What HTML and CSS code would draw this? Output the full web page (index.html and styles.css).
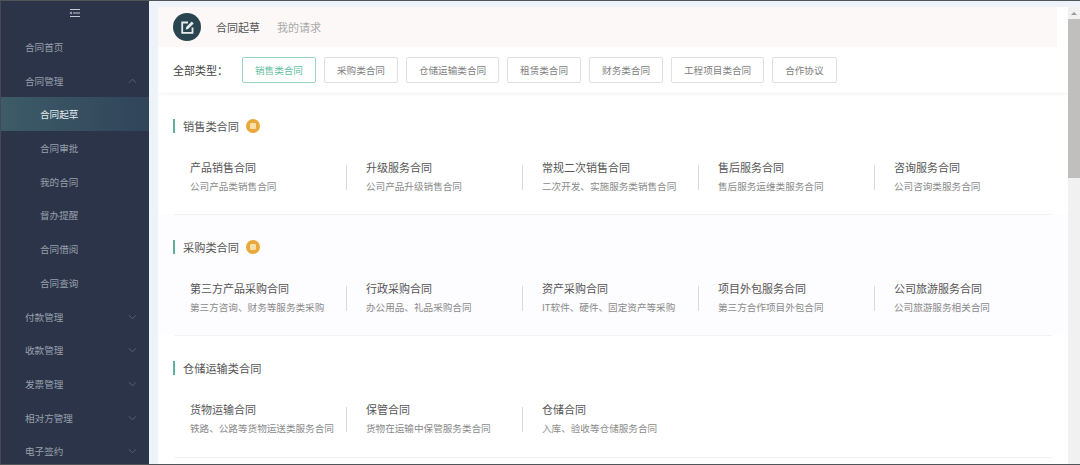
FILE: index.html
```html
<!DOCTYPE html>
<html lang="zh-CN">
<head>
    <meta charset="UTF-8">
    <meta name="viewport" content="width=device-width, initial-scale=1.0">
    <title>合同起草</title>
    <link rel="stylesheet" href="styles.css">
</head>
<body>
<div class="app">
    <aside class="sidebar">
        <div class="toggle">
            <svg width="12" height="10" viewBox="0 0 12 10"><path d="M1 1.5h10M4 5h7M1 8.5h10" stroke="#c4cad4" stroke-width="1" fill="none"/><path d="M0.5 5l2.2-1.6v3.2z" fill="#c4cad4"/></svg>
        </div>
        <a class="menu-item">合同首页</a>
        <a class="menu-item">合同管理<svg class="chevron" viewBox="0 0 10 6"><path d="M1 5l4-4 4 4" /></svg></a>
        <a class="menu-item sub active">合同起草</a>
        <a class="menu-item sub">合同审批</a>
        <a class="menu-item sub">我的合同</a>
        <a class="menu-item sub">督办提醒</a>
        <a class="menu-item sub">合同借阅</a>
        <a class="menu-item sub">合同查询</a>
        <a class="menu-item">付款管理<svg class="chevron" viewBox="0 0 10 6"><path d="M1 1l4 4 4-4" /></svg></a>
        <a class="menu-item">收款管理<svg class="chevron" viewBox="0 0 10 6"><path d="M1 1l4 4 4-4" /></svg></a>
        <a class="menu-item">发票管理<svg class="chevron" viewBox="0 0 10 6"><path d="M1 1l4 4 4-4" /></svg></a>
        <a class="menu-item">相对方管理<svg class="chevron" viewBox="0 0 10 6"><path d="M1 1l4 4 4-4" /></svg></a>
        <a class="menu-item">电子签约<svg class="chevron" viewBox="0 0 10 6"><path d="M1 1l4 4 4-4" /></svg></a>
    </aside>

    <main class="content">
        <div class="panel">
            <div class="tabs">
                <div class="tab-icon">
                    <svg width="15" height="15" viewBox="0 0 15 15"><path d="M8 2.500H2.200v10.300h10.300V7.500" fill="none" stroke="#e8eef0" stroke-width="1.800"/><path d="M5.800 9.400l.4-2.300L11.800 1.500l1.900 1.900-5.600 5.600z" fill="#e8eef0"/></svg>
                </div>
                <span class="tab current">合同起草</span>
                <span class="tab">我的请求</span>
            </div>

            <div class="filter">
                <span class="filter-label">全部类型：</span>
                <button type="button" class="type-btn selected">销售类合同</button>
                <button type="button" class="type-btn">采购类合同</button>
                <button type="button" class="type-btn">仓储运输类合同</button>
                <button type="button" class="type-btn">租赁类合同</button>
                <button type="button" class="type-btn">财务类合同</button>
                <button type="button" class="type-btn">工程项目类合同</button>
                <button type="button" class="type-btn">合作协议</button>
            </div>

            <section class="group">
                <h3 class="group-title">销售类合同<span class="badge"><i></i></span></h3>
                <div class="cards">
                    <div class="card"><div class="card-name">产品销售合同</div><div class="card-desc">公司产品类销售合同</div></div>
                    <div class="card"><div class="card-name">升级服务合同</div><div class="card-desc">公司产品升级销售合同</div></div>
                    <div class="card"><div class="card-name">常规二次销售合同</div><div class="card-desc">二次开发、实施服务类销售合同</div></div>
                    <div class="card"><div class="card-name">售后服务合同</div><div class="card-desc">售后服务运维类服务合同</div></div>
                    <div class="card"><div class="card-name">咨询服务合同</div><div class="card-desc">公司咨询类服务合同</div></div>
                </div>
            </section>

            <section class="group tinted">
                <h3 class="group-title">采购类合同<span class="badge"><i></i></span></h3>
                <div class="cards">
                    <div class="card"><div class="card-name">第三方产品采购合同</div><div class="card-desc">第三方咨询、财务等服务类采购</div></div>
                    <div class="card"><div class="card-name">行政采购合同</div><div class="card-desc">办公用品、礼品采购合同</div></div>
                    <div class="card"><div class="card-name">资产采购合同</div><div class="card-desc">IT软件、硬件、固定资产等采购</div></div>
                    <div class="card"><div class="card-name">项目外包服务合同</div><div class="card-desc">第三方合作项目外包合同</div></div>
                    <div class="card"><div class="card-name">公司旅游服务合同</div><div class="card-desc">公司旅游服务相关合同</div></div>
                </div>
            </section>

            <section class="group">
                <h3 class="group-title">仓储运输类合同</h3>
                <div class="cards">
                    <div class="card"><div class="card-name">货物运输合同</div><div class="card-desc">铁路、公路等货物运送类服务合同</div></div>
                    <div class="card"><div class="card-name">保管合同</div><div class="card-desc">货物在运输中保管服务类合同</div></div>
                    <div class="card"><div class="card-name">仓储合同</div><div class="card-desc">入库、验收等仓储服务合同</div></div>
                </div>
            </section>
        </div>

        <div class="scrollbar">
            <div class="scroll-up"></div>
            <div class="scroll-thumb"></div>
        </div>
    </main>
</div>
</body>
</html>
```

FILE: styles.css
```css
* {
    box-sizing: border-box;
}

html, body {
    margin: 0;
    height: 100%;
    overflow: hidden;
}

body {
    font-family: "Noto Sans CJK SC", "Liberation Sans", sans-serif;
    background-color: #eef2f9;
}

.app {
    display: flex;
    height: 465px;
    border-top: 1px solid #50555a;
    border-bottom: 1px solid #50555a;
}

/* sidebar */
.sidebar {
    width: 149px;
    flex-shrink: 0;
    background-color: #2b3448;
    border-left: 1px solid #454a50;
    overflow: hidden;
}

.toggle {
    height: 29px;
    display: flex;
    justify-content: center;
    padding-top: 7px;
}

.menu-item {
    display: flex;
    align-items: center;
    justify-content: space-between;
    height: 33.72px;
    padding: 0 12px 0 24px;
    font-size: 9.6px;
    color: #98a0ad;
}

.menu-item.sub {
    padding-left: 39px;
}

.menu-item.active {
    color: #e6ecef;
    background: linear-gradient(to right, #3d5b68, #30445a);
}

.chevron {
    width: 9px;
    height: 6px;
    fill: none;
    stroke: #5d6678;
    stroke-width: 1;
}

/* content */
.content {
    flex: 1;
    display: flex;
    padding: 6px 0 0 9px;
    min-width: 0;
}

.panel {
    flex: 1;
    background-color: #fff;
    min-width: 0;
    overflow: hidden;
}

.tabs {
    display: flex;
    align-items: center;
    height: 40px;
    margin-right: 11px;
    padding-left: 15px;
    background-color: #fbf8f7;
}

.tab-icon {
    width: 28px;
    height: 28px;
    border-radius: 50%;
    background-color: #2a4450;
    display: flex;
    align-items: center;
    justify-content: center;
    margin-right: 15px;
}

.tab {
    font-size: 11px;
    color: #a9a9a9;
    margin-right: 17px;
}

.tab.current {
    color: #555;
}

.filter {
    display: flex;
    align-items: center;
    gap: 8px;
    height: 46px;
    padding-left: 15px;
    background-color: #fff;
    box-shadow: 0 2px 3px rgba(0, 0, 0, 0.04);
}

.filter-label {
    width: 61px;
    font-family: "Noto Sans CJK TC", sans-serif;
    font-size: 11px;
    color: #444;
}

.type-btn {
    height: 26px;
    padding: 0 12px;
    font-family: inherit;
    font-size: 9.6px;
    color: #808080;
    background-color: #fff;
    border: 1px solid #dfdfe2;
    border-radius: 2px;
}

.type-btn.selected {
    color: #5fbf9f;
    border-color: #9ad6c4;
}

.group {
    padding-top: 26px;
    padding-bottom: 20.2px;
    position: relative;
}

.group::after {
    content: "";
    position: absolute;
    z-index: 1;
    left: 16px;
    right: 16px;
    bottom: -1px;
    height: 1px;
    background-color: #f2f2f4;
}

.group.tinted {
    background-color: #fdfcfe;
}

.group-title {
    display: flex;
    align-items: center;
    height: 14px;
    margin: 0 0 26px 15px;
    padding-left: 8px;
    font-size: 11.2px;
    font-weight: normal;
    color: #555;
    border-left: 2px solid #5fb09a;
}

.badge {
    width: 14px;
    height: 14px;
    margin-left: 7px;
    border-radius: 50%;
    background-color: #e8a93a;
    display: flex;
    align-items: center;
    justify-content: center;
}

.badge i {
    width: 6px;
    height: 6px;
    border-radius: 1px;
    background-color: #f6dfa8;
}

.cards {
    display: grid;
    grid-template-columns: repeat(5, 176px);
    margin-left: 12px;
}

.card {
    position: relative;
    padding-left: 20px;
}

.card + .card::before {
    content: "";
    position: absolute;
    left: 0;
    top: 6px;
    height: 25px;
    width: 1px;
    background-color: #d9d9dc;
}

.card-name {
    font-size: 11px;
    line-height: 16px;
    margin-bottom: 3px;
    color: #555;
}

.card-desc {
    font-size: 9.6px;
    line-height: 16px;
    color: #8a8a8a;
    white-space: nowrap;
}

/* scrollbar */
.scrollbar {
    width: 12px;
    flex-shrink: 0;
    background-color: #f1f1f1;
}

.scroll-up {
    height: 12px;
    position: relative;
}

.scroll-up::before {
    content: "";
    position: absolute;
    left: 3px;
    top: 5px;
    border-left: 3px solid transparent;
    border-right: 3px solid transparent;
    border-bottom: 3px solid #9a9a9a;
}

.scroll-thumb {
    height: 159px;
    background-color: #c1bebe;
}
```
